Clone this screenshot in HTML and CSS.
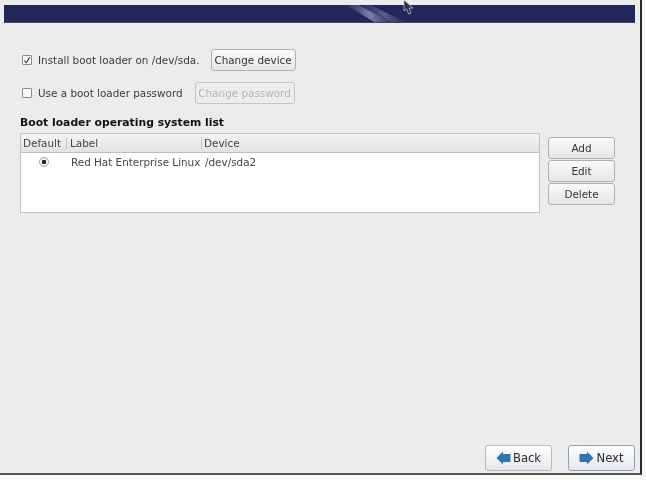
FILE: index.html
```html
<!DOCTYPE html>
<html lang="en">
<head>
<meta charset="utf-8">
<title>Boot loader</title>
<link rel="stylesheet" href="styles.css">
</head>
<body>
<div class="window">
  <header class="banner">
    <svg class="shine" width="110" height="18" viewBox="0 0 110 18" aria-hidden="true">
      <defs>
        <linearGradient id="sh" x1="0" y1="0" x2="1" y2="0">
          <stop offset="0" stop-color="#6f78a8" stop-opacity="0.1"/>
          <stop offset="0.5" stop-color="#9aa0c4" stop-opacity="0.75"/>
          <stop offset="1" stop-color="#6f78a8" stop-opacity="0.1"/>
        </linearGradient>
      </defs>
      <polygon points="10,0 22,0 58,18 40,18" fill="url(#sh)"/>
      <polygon points="24,0 34,0 72,18 58,18" fill="url(#sh)" opacity="0.6"/>
    </svg>
  </header>
  <main class="content">
    <div class="row row-first">
      <label class="check"><span class="box"><svg width="9" height="9" viewBox="0 0 9 9"><path d="M1.5 4.5 L3.6 7 L7.6 1" fill="none" stroke="#444" stroke-width="1.3"/></svg></span>Install boot loader on /dev/sda.</label>
      <button class="btn btn-device">Change device</button>
    </div>
    <div class="row row-second">
      <label class="check"><span class="box"></span>Use a boot loader password</label>
      <button class="btn btn-pass" disabled>Change password</button>
    </div>
    <h2 class="title">Boot loader operating system list</h2>
    <div class="list-area">
      <div class="table">
        <div class="thead">
          <span class="col col-default">Default</span>
          <span class="col col-label">Label</span>
          <span class="col col-device">Device</span>
        </div>
        <div class="tr">
          <span class="col col-default radio-cell"><span class="radio"></span></span>
          <span class="col col-label">Red Hat Enterprise Linux</span>
          <span class="col col-device">/dev/sda2</span>
        </div>
      </div>
      <div class="side">
        <button class="btn side-btn">Add</button>
        <button class="btn side-btn">Edit</button>
        <button class="btn side-btn">Delete</button>
      </div>
    </div>
    <footer class="nav">
      <button class="btn nav-btn"><svg width="15" height="14" viewBox="0 0 15 14"><path d="M0.5 7 L7 0.5 V3 H14.5 V11 H7 V13.5 Z" fill="#2f74b0"/></svg>Back</button>
      <button class="btn nav-btn nav-next"><svg width="15" height="14" viewBox="0 0 15 14"><path d="M14.5 7 L8 0.5 V3 H0.5 V11 H8 V13.5 Z" fill="#2f74b0"/></svg>Next</button>
    </footer>
  </main>
  <svg class="cursor" width="11" height="15" viewBox="0 0 11 15" aria-hidden="true"><path d="M1 0 L1 11 L3.6 8.8 L5.6 14 L8 13 L6 8 L10 8 Z" fill="#2b2f45" stroke="#c8cad4" stroke-width="0.7"/></svg>
</div>
</body>
</html>
```
FILE: styles.css
```css
* { box-sizing: border-box; }
html, body { margin: 0; height: 100%; background: #f8f8f6; }
body { width: 646px; height: 480px; overflow: hidden; font-family: "DejaVu Sans", sans-serif; font-size: 10.4px; color: #333; }
.window { position: relative; width: 642px; height: 475px; background: #ececec; border-right: 2px solid #2a2a2a; border-bottom: 2px solid #555; padding-top: 5px; display: flex; flex-direction: column; filter: blur(0.35px); }
.banner { position: relative; margin-left: 4px; margin-right: 5px; height: 18px; background: #1f2858; flex: none; overflow: hidden; border-bottom: 1px solid #3c4474; }
.shine { position: absolute; left: 332px; top: 0; }
.cursor { position: absolute; left: 403px; top: 0; }
.content { flex: 1; display: flex; flex-direction: column; padding: 0 5px 0 20px; min-height: 0; }
.row { display: flex; align-items: center; }
.row-first { margin-top: 26px; height: 22px; padding-left: 2px; }
.row-second { margin-top: 11px; height: 22px; padding-left: 2px; }
.check { display: flex; align-items: center; color: #3a3a3a; }
.box { width: 10px; height: 10px; background: #fafafa; border: 1px solid #8a8a8a; margin-right: 6px; display: flex; align-items: center; justify-content: center; border-radius: 1px; }
.btn { font-family: inherit; font-size: 10.4px; color: #333; border: 1px solid #b0b0b0; border-radius: 3px; background: linear-gradient(#fafafa, #e6e6e6); padding: 0; display: flex; align-items: center; justify-content: center; }
.btn-device { width: 85px; height: 22px; margin-left: 11px; }
.btn-pass { width: 100px; height: 22px; margin-left: 12px; color: #b4b4b4; background: #ededed; border-color: #c4c4c4; }
.title { margin: 12px 0 0; font-size: 10.8px; font-weight: bold; color: #111; height: 14px; line-height: 14px; }
.list-area { display: flex; margin-top: 3px; }
.table { width: 520px; height: 80px; background: #fff; border: 1px solid #c2c2c2; }
.thead { display: flex; height: 19px; padding-bottom: 1px; background: linear-gradient(#f4f4f4, #e2e2e2); border-bottom: 1px solid #bdbdbd; align-items: center; color: #444; }
.tr { display: flex; height: 18px; align-items: center; color: #444; }
.col { display: block; padding-left: 2px; white-space: nowrap; }
.col-default { width: 45px; }
.col-label { width: 135px; padding-left: 5px; }
.col-device { padding-left: 4px; }
.thead .col-label { padding-left: 3px; border-left: 1px solid #c8c8c8; }
.thead .col-device { padding-left: 2px; border-left: 1px solid #c8c8c8; }
.radio-cell { display: flex; justify-content: center; padding-left: 1px; }
.radio { width: 10px; height: 10px; border-radius: 50%; border: 1px solid #a0a0a0; background: radial-gradient(circle, #222 0 2px, #f4f4f4 2.5px); }
.side { display: flex; flex-direction: column; gap: 1px; margin-left: 8px; margin-top: 4px; }
.side-btn { width: 67px; height: 22px; }
.nav { margin-top: auto; margin-bottom: 2px; display: flex; justify-content: flex-end; gap: 16px; }
.nav-btn { width: 67px; height: 26px; gap: 2px; font-size: 11.6px; color: #2a2a2a; border-color: #b8b8b8; background: linear-gradient(#fdfdfd, #e4e8ee); }
.nav-next { border-color: #8ea2b8; }
```
